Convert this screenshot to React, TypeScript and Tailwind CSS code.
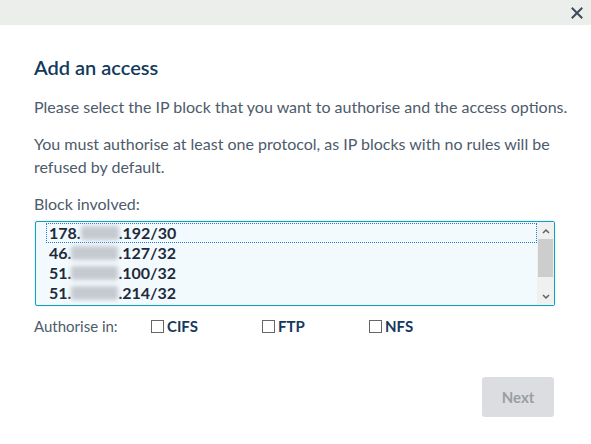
import React from "react";

const rows = [
  { pre: "178.", post: ".192/30", w: "w-[38px]" },
  { pre: "46.", post: ".127/32", w: "w-[47px]" },
  { pre: "51.", post: ".100/32", w: "w-[47px]" },
  { pre: "51.", post: ".214/32", w: "w-[47px]" },
];

export default function App() {
  return (
    <div className="w-[591px] h-[444px] bg-white font-['Source_Sans_Pro','Lato',sans-serif] relative overflow-hidden">
      <div className="h-[25px] bg-[#eceeeb] flex items-center justify-end pr-[8px]">
        <svg width="12" height="12" viewBox="0 0 12 12">
          <path d="M1.5 1.5 L10.5 10.5 M10.5 1.5 L1.5 10.5" stroke="#3d4a5c" strokeWidth="2" strokeLinecap="square" />
        </svg>
      </div>
      <div className="px-[34px]">
        <h1 className="mt-[29px] text-[20px] leading-[26px] font-semibold text-[#143a5c]">Add an access</h1>
        <p className="mt-[15px] -mr-[18px] text-[16px] leading-[23px] text-[#4d5b6b]">
          Please select the IP block that you want to authorise and the access options.
        </p>
        <p className="mt-[14px] -mr-[18px] text-[16px] leading-[23px] text-[#4d5b6b]">
          You must authorise at least one protocol, as IP blocks with no rules will be refused by default.
        </p>
        <p className="mt-[14px] text-[16px] leading-[23px] text-[#4d5b6b]">Block involved:</p>
        <div className="mt-[6px] ml-[1px] w-[520px] h-[85px] border border-[#0aa3c2] rounded-[2px] bg-[#f3fafd] flex shadow-[0_0_2px_rgba(0,0,0,0.15)]">
          <div className="flex-1 pl-[10px] pt-[1px]">
            {rows.map((r, i) => (
              <div
                key={i}
                className={`h-[20px] flex items-center pl-[3px] text-[16px] font-bold text-[#1e2a3c] ${i === 0 ? "outline outline-1 outline-dotted outline-[#1e7cd6] -outline-offset-1" : ""}`}
              >
                <span>{r.pre}</span>
                <span className={`inline-block h-[14px] ${r.w} bg-[#c4cad0] blur-[2px] rounded-[2px]`} />
                <span>{r.post}</span>
              </div>
            ))}
          </div>
          <div className="w-[17px] bg-[#f0f0f0] flex flex-col items-center justify-between">
            <div className="h-[17px] flex items-center justify-center">
              <svg width="8" height="6" viewBox="0 0 8 6"><path d="M1 5 L4 2 L7 5" stroke="#606060" strokeWidth="1.5" fill="none" /></svg>
            </div>
            <div className="w-[15px] flex-1 flex flex-col">
              <div className="h-[38px] bg-[#cdcdcd]" />
            </div>
            <div className="h-[17px] flex items-center justify-center">
              <svg width="8" height="6" viewBox="0 0 8 6"><path d="M1 1 L4 4 L7 1" stroke="#606060" strokeWidth="1.5" fill="none" /></svg>
            </div>
          </div>
        </div>
        <div className="mt-[10px] flex items-center text-[15px] h-[20px]">
          <span className="text-[#4d5b6b] w-[117px]">Authorise in:</span>
          <label className="flex items-center gap-[3px] w-[111px] font-bold text-[#143a5c]">
            <span className="inline-block w-[13px] h-[13px] border border-[#666] bg-white" />CIFS
          </label>
          <label className="flex items-center gap-[3px] w-[107px] font-bold text-[#143a5c]">
            <span className="inline-block w-[13px] h-[13px] border border-[#666] bg-white" />FTP
          </label>
          <label className="flex items-center gap-[3px] font-bold text-[#143a5c]">
            <span className="inline-block w-[13px] h-[13px] border border-[#666] bg-white" />NFS
          </label>
        </div>
        <div className="mt-[41px] flex justify-end pr-[3px]">
          <button className="w-[72px] h-[40px] rounded-[3px] bg-[#dcdde0] text-[#9a9da3] text-[15px] font-bold">Next</button>
        </div>
      </div>
    </div>
  );
}
